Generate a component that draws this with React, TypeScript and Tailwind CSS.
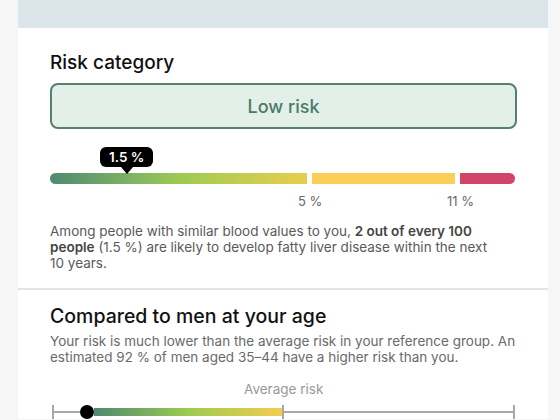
import React from 'react';

const font = { fontFamily: 'Inter, "Noto Sans", sans-serif' };

function RiskBar() {
  return (
    <div className="relative mt-5">
      <div className="absolute left-[50px] top-[-26px] flex flex-col items-center">
        <div className="rounded-md bg-black px-[9px] py-[2px] text-[13.5px] font-semibold leading-4 text-white">1.5 %</div>
        <div className="h-0 w-0 border-x-[6px] border-t-[7px] border-x-transparent border-t-black" />
      </div>
      <div className="flex h-[11px] gap-[5px]">
        <div className="w-[257px] rounded-l-full bg-gradient-to-r from-[#4f8a6f] via-[#9cca52] to-[#e8cd4e]" />
        <div className="w-[143px] bg-[#f9cf55]" />
        <div className="flex-1 rounded-r-full bg-[#d2456a]" />
      </div>
      <div className="flex pt-[9px] pl-[248px] text-[13px] leading-4 text-[#6a6a6a]">
        <span className="w-[149px]">5 %</span>
        <span>11 %</span>
      </div>
    </div>
  );
}

function CompareBar() {
  return (
    <div className="mt-[16px]">
      <div className="pl-[194px] text-[13.5px] leading-4 text-[#999999]">Average risk</div>
      <svg className="mt-[8px] block" width="465" height="14" viewBox="0 0 465 14">
        <rect x="2" y="6" width="463" height="2" fill="#a8a8a8" />
        <rect x="2" y="0" width="2" height="14" fill="#a8a8a8" />
        <rect x="232" y="0" width="2" height="14" fill="#a8a8a8" />
        <rect x="463" y="0" width="2" height="14" fill="#a8a8a8" />
        <defs>
          <linearGradient id="cmp" x1="0" x2="1" y1="0" y2="0">
            <stop offset="0" stopColor="#4f8a6f" />
            <stop offset="0.5" stopColor="#9cca52" />
            <stop offset="1" stopColor="#f3cd4f" />
          </linearGradient>
        </defs>
        <rect x="44" y="3" width="188" height="8" fill="url(#cmp)" />
        <circle cx="37" cy="7" r="7" fill="#000" />
      </svg>
    </div>
  );
}

export default function App() {
  return (
    <div className="h-[420px] overflow-hidden bg-[#f6f6f6] pl-[18px]" style={font}>
      <div className="w-[530px] bg-white">
        <div className="h-[28px] bg-[#dce6ea]" />
        <div className="px-8 pt-[23px] pb-[17px]">
          <h2 className="text-[19px] font-medium leading-6 text-[#111]">Risk category</h2>
          <div className="mt-[8px] flex h-[46px] w-[467px] items-center justify-center rounded-lg border-2 border-[#567f6d] bg-[#e3efe9] text-[18px] font-medium text-[#4c7a66]">
            Low risk
          </div>
          <div className="mt-[44px] w-[465px]">
            <RiskBar />
          </div>
          <p className="mt-[14px] w-[440px] text-[13.5px] leading-[16px] text-[#5a5a5a]">
            Among people with similar blood values to you, <b className="font-semibold text-[#444]">2 out of every 100 people</b> (1.5 %) are likely to develop fatty liver disease within the next 10&nbsp;years.
          </p>
        </div>
        <div className="h-[2px] bg-[#e4e4e4]" />
        <div className="px-8 pt-[14px]">
          <h2 className="text-[19.5px] font-medium leading-6 text-[#111]">Compared to men at your age</h2>
          <p className="mt-[5px] w-[470px] text-[13.5px] leading-[16px] text-[#6a6a6a]">
            Your risk is much lower than the average risk in your reference group. An estimated 92 % of men aged 35–44 have a higher risk than you.
          </p>
          <div className="w-[465px]">
            <CompareBar />
          </div>
        </div>
      </div>
    </div>
  );
}
